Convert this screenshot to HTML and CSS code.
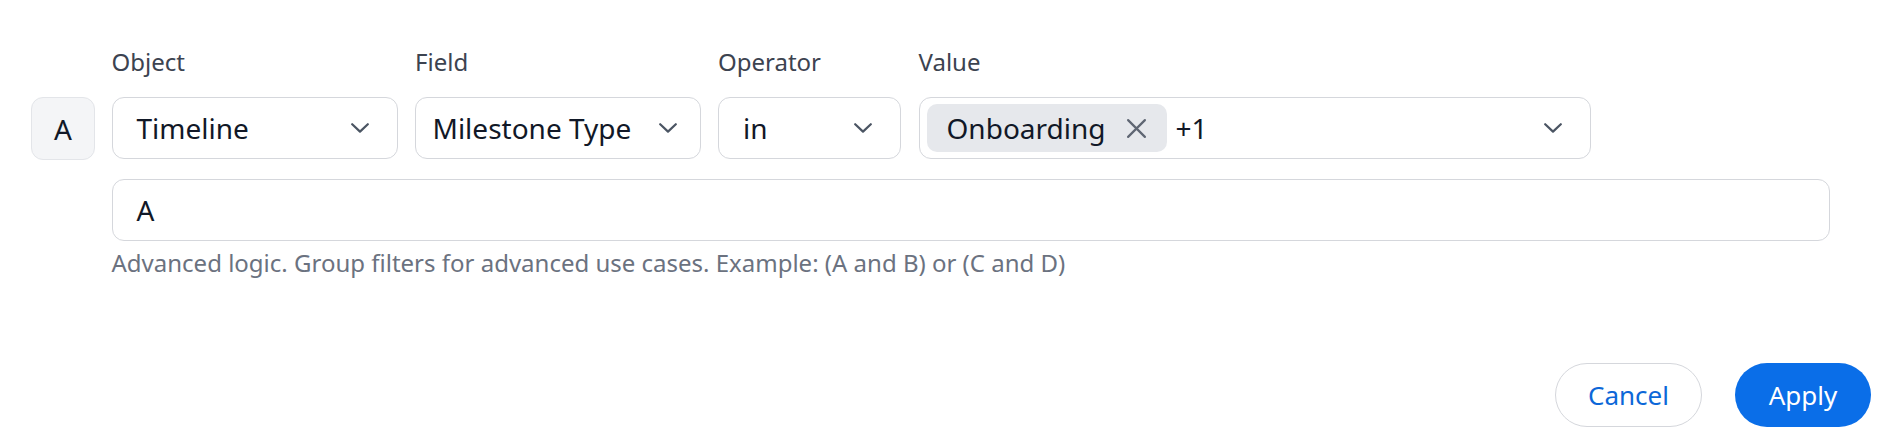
FILE: index.html
```html
<!DOCTYPE html>
<html lang="en">
<head>
<meta charset="utf-8">
<title>Filter</title>
<link rel="stylesheet" href="styles.css">
</head>
<body>
<div class="panel">
  <div class="filter-grid">
    <div class="badge">A</div>
    <div class="fields">
      <div class="field field-object">
        <span class="label">Object</span>
        <div class="select">
          <span class="select-text">Timeline</span>
          <svg class="chevron" viewBox="0 0 18 10" width="18" height="10"><path d="M1.2 1.2 L9 8.6 L16.8 1.2" fill="none" stroke="#4b5563" stroke-width="2.2" stroke-linecap="round" stroke-linejoin="round"/></svg>
        </div>
      </div>
      <div class="field field-field">
        <span class="label">Field</span>
        <div class="select select-tight">
          <span class="select-text">Milestone Type</span>
          <svg class="chevron" viewBox="0 0 18 10" width="18" height="10"><path d="M1.2 1.2 L9 8.6 L16.8 1.2" fill="none" stroke="#4b5563" stroke-width="2.2" stroke-linecap="round" stroke-linejoin="round"/></svg>
        </div>
      </div>
      <div class="field field-operator">
        <span class="label">Operator</span>
        <div class="select">
          <span class="select-text">in</span>
          <svg class="chevron" viewBox="0 0 18 10" width="18" height="10"><path d="M1.2 1.2 L9 8.6 L16.8 1.2" fill="none" stroke="#4b5563" stroke-width="2.2" stroke-linecap="round" stroke-linejoin="round"/></svg>
        </div>
      </div>
      <div class="field field-value">
        <span class="label">Value</span>
        <div class="select select-multi">
          <div class="tags">
            <span class="chip">Onboarding
              <svg class="chip-x" viewBox="0 0 20 20" width="21" height="21"><path d="M2 2 L18 18 M18 2 L2 18" fill="none" stroke="#5f6673" stroke-width="2.1" stroke-linecap="round"/></svg>
            </span>
            <span class="more">+1</span>
          </div>
          <svg class="chevron" viewBox="0 0 18 10" width="18" height="10"><path d="M1.2 1.2 L9 8.6 L16.8 1.2" fill="none" stroke="#4b5563" stroke-width="2.2" stroke-linecap="round" stroke-linejoin="round"/></svg>
        </div>
      </div>
    </div>
    <div class="logic">A</div>
    <p class="help">Advanced logic. Group filters for advanced use cases. Example: (A and B) or (C and D)</p>
  </div>
  <div class="actions">
    <button class="btn btn-cancel">Cancel</button>
    <button class="btn btn-apply">Apply</button>
  </div>
</div>
</body>
</html>
```
FILE: styles.css
```css
* { box-sizing: border-box; }
html, body {
  margin: 0;
  background: #ffffff;
}
body {
  width: 1896px;
  height: 442px;
  overflow: hidden;
  font-family: "Noto Sans", "Open Sans", sans-serif;
  color: #111827;
}
.panel {
  padding: 46px 25px 0 31px;
}
.filter-grid {
  display: grid;
  grid-template-columns: 64px 1718px;
  column-gap: 16.5px;
}
.badge {
  grid-column: 1;
  grid-row: 1;
  align-self: end;
  width: 64px;
  height: 63px;
  margin-bottom: -1px;
  border: 1.5px solid #e3e5e9;
  border-radius: 12px;
  background: #f4f5f7;
  display: flex;
  align-items: center;
  justify-content: center;
  font-size: 28px;
  color: #111827;
}
.fields {
  grid-column: 2;
  grid-row: 1;
  display: flex;
  gap: 17.5px;
  align-items: flex-end;
}
.field {
  display: flex;
  flex-direction: column;
  gap: 19px;
}
.field-object { width: 286px; }
.field-field { width: 285.5px; }
.field-operator { width: 183px; }
.field-value { width: 672px; }
.label {
  font-size: 24px;
  line-height: 32px;
  color: #3c4350;
}
.select {
  height: 62px;
  border: 1.5px solid #d5d7dc;
  border-radius: 12px;
  background: #fff;
  display: flex;
  align-items: center;
  justify-content: space-between;
  padding: 0 28px 0 24px;
}
.select-tight {
  padding: 0 22.5px 0 16.5px;
}
.select-text {
  font-size: 28px;
  line-height: 36px;
  color: #111827;
  white-space: nowrap;
}
.chevron {
  flex: none;
  display: block;
}
.select-multi {
  padding-left: 7.5px;
}
.tags {
  display: flex;
  align-items: center;
  gap: 9px;
}
.chip {
  height: 48px;
  border-radius: 10px;
  background: #e6e8ec;
  display: flex;
  align-items: center;
  gap: 20px;
  padding: 0 20px 0 19.5px;
  font-size: 28px;
  color: #111827;
}
.chip-x {
  display: block;
  width: 21px;
  height: 21px;
}
.more {
  font-size: 28px;
  color: #111827;
}
.logic {
  grid-column: 2;
  grid-row: 2;
  margin-top: 20px;
  height: 62px;
  border: 1.5px solid #d5d7dc;
  border-radius: 12px;
  display: flex;
  align-items: center;
  padding: 0 24px;
  font-size: 28px;
  color: #111827;
}
.help {
  grid-column: 2;
  grid-row: 3;
  margin: 7px 0 0 0;
  font-size: 24px;
  line-height: 30px;
  color: #6b7280;
}
.actions {
  display: flex;
  justify-content: flex-end;
  gap: 33px;
  margin-top: 85px;
}
.btn {
  height: 64px;
  border-radius: 32px;
  font-family: "Noto Sans", "Open Sans", sans-serif;
  font-size: 26px;
  padding: 0;
  cursor: pointer;
}
.btn-cancel {
  width: 147px;
  background: #fff;
  border: 1.5px solid #d5d7dc;
  color: #0c67d8;
}
.btn-apply {
  width: 136px;
  background: #0a6ee8;
  border: none;
  color: #ffffff;
}
```
